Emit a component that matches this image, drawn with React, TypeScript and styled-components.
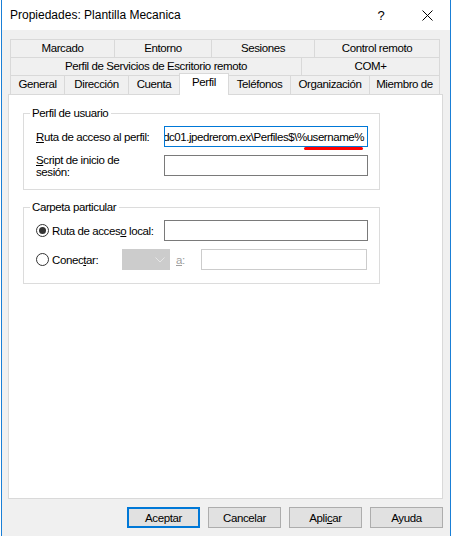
import React from "react";
import styled, { createGlobalStyle, css } from "styled-components";

const FONT = `"Liberation Sans", Arial, sans-serif`;

const GlobalStyle = createGlobalStyle`
  html, body { margin: 0; padding: 0; background: #ffffff; }
  body { font-family: ${FONT}; font-size: 11.5px; letter-spacing: -0.4px; color: #000; }
  * { box-sizing: border-box; }
`;

const Window = styled.div`
  margin-left: 1px;
  width: 450px;
  height: 536px;
  border-left: 1px solid #1a7fd6;
  border-right: 1px solid #1a7fd6;
  background: #f0f0f0;
  display: flex;
  flex-direction: column;
`;

const TitleBar = styled.div`
  height: 30px;
  flex: none;
  background: #ffffff;
  display: flex;
  align-items: center;
  padding-left: 8px;
`;

const TitleText = styled.div`
  flex: 1;
  font-size: 12px;
  letter-spacing: 0;
`;

const CaptionButton = styled.div`
  width: 46px;
  height: 30px;
  display: flex;
  align-items: center;
  justify-content: center;
  font-size: 13px;
  letter-spacing: 0;
`;

const Body = styled.div`
  flex: 1;
  display: flex;
  flex-direction: column;
  padding: 9px 7px 0 6px;
`;

const TabStrip = styled.div`
  margin: 0 2px;
  display: flex;
  flex-direction: column;
`;

const TabRow = styled.div<{ $h: number }>`
  display: flex;
  height: ${(p) => p.$h}px;
`;

const Tab = styled.div<{ $w: number; $selected?: boolean }>`
  flex: 0 0 ${(p) => p.$w}px;
  border-top: 1px solid #d9d9d9;
  border-left: 1px solid #d9d9d9;
  text-align: center;
  line-height: 17px;
  white-space: nowrap;
  &:last-child {
    border-right: 1px solid #d9d9d9;
  }
  ${(p) =>
    p.$selected &&
    css`
      position: relative;
      z-index: 2;
      flex-basis: ${p.$w + 1}px;
      margin-right: -1px;
      margin-top: -2px;
      height: 22px;
      background: #ffffff;
      border-right: 1px solid #d9d9d9;
      line-height: 15px;
      padding-top: 1px;
    `}
`;

const Panel = styled.div`
  flex: none;
  height: 405px;
  background: #ffffff;
  border: 1px solid #d9d9d9;
  padding: 11px 0 0 14px;
`;

const Group = styled.fieldset<{ $gap?: number }>`
  width: 357px;
  margin: ${(p) => p.$gap ?? 0}px 0 0 0;
  padding: 5px 11px 13px 12px;
  border: 1px solid #dcdcdc;
  min-width: 0;
`;

const Legend = styled.legend`
  margin-left: -6px;
  padding: 0 3px 0 2px;
  line-height: 15px;
`;

const FormGrid = styled.div`
  display: grid;
  grid-template-columns: 128px 204px;
  row-gap: 8px;
  align-items: center;
`;

const Label = styled.div`
  line-height: 12px;
  margin: -2px 0;
`;

const Key = styled.span`
  text-decoration: underline;
  text-underline-offset: 1px;
`;

const InputWrap = styled.div`
  position: relative;
`;

const TextBox = styled.div<{ $focused?: boolean; $disabled?: boolean; $w?: number }>`
  width: ${(p) => p.$w ?? 204}px;
  height: 21px;
  background: #ffffff;
  border: 1px solid ${(p) => (p.$focused ? "#0078d7" : p.$disabled ? "#cccccc" : "#7a7a7a")};
  display: flex;
  align-items: center;
  justify-content: flex-end;
  overflow: hidden;
  white-space: nowrap;
  letter-spacing: -0.45px;
  padding: 0 3px 0 2px;
`;

const RedMark = styled.div`
  position: absolute;
  left: 140px;
  top: 21px;
  width: 59px;
  height: 3px;
  border-radius: 2px;
  background: #ff0000;
`;

const RadioLabel = styled.div<{ $w?: number }>`
  display: flex;
  align-items: center;
  gap: 3px;
  ${(p) => p.$w && `width: ${p.$w}px;`}
`;

const RadioCircle = styled.div`
  width: 13px;
  height: 13px;
  border: 1px solid #333333;
  border-radius: 50%;
  background: #ffffff;
  display: flex;
  align-items: center;
  justify-content: center;
  flex: none;
`;

const RadioDot = styled.div`
  width: 7px;
  height: 7px;
  border-radius: 50%;
  background: #333333;
`;

const FlexRow = styled.div`
  display: flex;
  align-items: center;
  margin-top: 8px;
`;

const Combo = styled.div`
  width: 48px;
  height: 21px;
  background: #cccccc;
  border: 1px solid #cccccc;
  display: flex;
  align-items: center;
  justify-content: flex-end;
  padding-right: 4px;
`;

const DisabledLabel = styled.div`
  width: 25px;
  margin-left: 6px;
  color: #a0a0a0;
`;

const ButtonRow = styled.div`
  display: flex;
  justify-content: flex-end;
  gap: 8px;
  margin-top: 8px;
`;

const Button = styled.div<{ $default?: boolean }>`
  width: 73px;
  height: 21px;
  background: #e1e1e1;
  border: ${(p) => (p.$default ? "2px solid #0078d7" : "1px solid #adadad")};
  display: flex;
  align-items: center;
  justify-content: center;
`;

const Radio: React.FC<{ checked?: boolean }> = ({ checked }) => (
  <RadioCircle>{checked && <RadioDot />}</RadioCircle>
);

const row1 = [
  { t: "Marcado", w: 104 },
  { t: "Entorno", w: 97 },
  { t: "Sesiones", w: 103 },
  { t: "Control remoto", w: 126 },
];
const row2 = [
  { t: "Perfil de Servicios de Escritorio remoto", w: 291 },
  { t: "COM+", w: 139 },
];
const row3 = [
  { t: "General", w: 54 },
  { t: "Dirección", w: 64 },
  { t: "Cuenta", w: 51 },
  { t: "Perfil", w: 49, sel: true },
  { t: "Teléfonos", w: 62 },
  { t: "Organización", w: 79 },
  { t: "Miembro de", w: 71 },
];

export default function App() {
  return (
    <>
      <GlobalStyle />
      <Window>
        <TitleBar>
          <TitleText>Propiedades: Plantilla Mecanica</TitleText>
          <CaptionButton>?</CaptionButton>
          <CaptionButton>
            <svg width="11" height="11" viewBox="0 0 11 11">
              <path d="M0.5 0.5 L10.5 10.5 M10.5 0.5 L0.5 10.5" stroke="#000" strokeWidth="1" fill="none" />
            </svg>
          </CaptionButton>
        </TitleBar>
        <Body>
          <TabStrip>
            <TabRow $h={18}>
              {row1.map((t) => (
                <Tab key={t.t} $w={t.w}>{t.t}</Tab>
              ))}
            </TabRow>
            <TabRow $h={18}>
              {row2.map((t) => (
                <Tab key={t.t} $w={t.w}>{t.t}</Tab>
              ))}
            </TabRow>
            <TabRow $h={19}>
              {row3.map((t) => (
                <Tab key={t.t} $w={t.w} $selected={t.sel}>{t.t}</Tab>
              ))}
            </TabRow>
          </TabStrip>
          <Panel>
            <Group>
              <Legend>Perfil de usuario</Legend>
              <FormGrid>
                <Label>
                  <Key>R</Key>uta de acceso al perfil:
                </Label>
                <InputWrap>
                  <TextBox $focused>dc01.jpedrerom.ex\Perfiles$\%username%</TextBox>
                  <RedMark />
                </InputWrap>
                <Label>
                  <Key>S</Key>cript de inicio de
                  <br />
                  sesión:
                </Label>
                <TextBox />
              </FormGrid>
            </Group>
            <Group $gap={10}>
              <Legend>Carpeta particular</Legend>
              <FormGrid>
                <RadioLabel>
                  <Radio checked />
                  <span>
                    Ruta de acces<Key>o</Key> local:
                  </span>
                </RadioLabel>
                <TextBox />
              </FormGrid>
              <FlexRow>
                <RadioLabel $w={86}>
                  <Radio />
                  <span>
                    Conec<Key>t</Key>ar:
                  </span>
                </RadioLabel>
                <Combo>
                  <svg width="10" height="6" viewBox="0 0 10 6">
                    <path d="M0.5 0.5 L5 5 L9.5 0.5" stroke="#e6e6e6" strokeWidth="1" fill="none" />
                  </svg>
                </Combo>
                <DisabledLabel>
                  <Key>a</Key>:
                </DisabledLabel>
                <TextBox $disabled $w={166} />
              </FlexRow>
            </Group>
          </Panel>
          <ButtonRow>
            <Button $default>Aceptar</Button>
            <Button>Cancelar</Button>
            <Button>
              Apli<Key>c</Key>ar
            </Button>
            <Button>Ayuda</Button>
          </ButtonRow>
        </Body>
      </Window>
    </>
  );
}
